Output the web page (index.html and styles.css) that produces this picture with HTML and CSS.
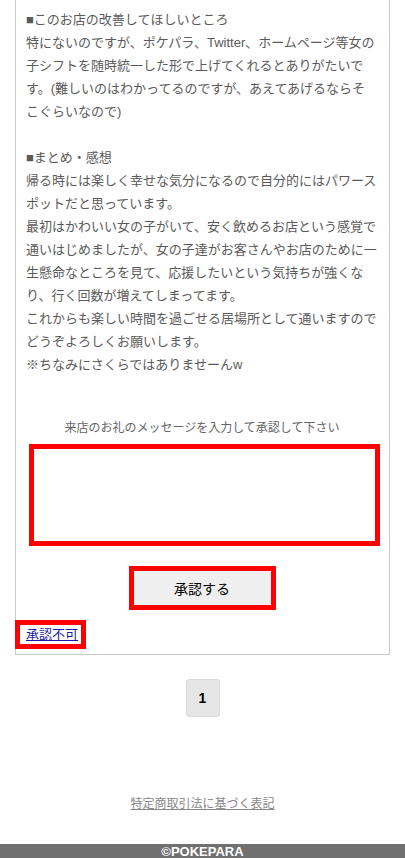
FILE: index.html
```html
<!DOCTYPE html>
<html lang="ja">
<head>
    <meta charset="UTF-8">
    <meta name="viewport" content="width=device-width, initial-scale=1.0">
    <title>口コミ承認 - ポケパラ</title>
    <link rel="stylesheet" href="styles.css">
</head>
<body>
    <div class="review-box">
        <div class="review-text">
            ■このお店の改善してほしいところ<br>
            特にないのですが、ポケパラ、Twitter、ホームページ等女の子シフトを随時統一した形で上げてくれるとありがたいです。(難しいのはわかってるのですが、あえてあげるならそこぐらいなので)<br>
            <br>
            ■まとめ・感想<br>
            帰る時には楽しく幸せな気分になるので自分的にはパワースポットだと思っています。<br>
            最初はかわいい女の子がいて、安く飲めるお店という感覚で通いはじめましたが、女の子達がお客さんやお店のために一生懸命なところを見て、応援したいという気持ちが強くなり、行く回数が増えてしまってます。<br>
            これからも楽しい時間を過ごせる居場所として通いますのでどうぞよろしくお願いします。<br>
            ※ちなみにさくらではありませーんw
        </div>
        <form class="reply-form">
            <p class="reply-label">来店のお礼のメッセージを入力して承認して下さい</p>
            <textarea class="reply-input"></textarea>
            <button type="button" class="approve-btn">承認する</button>
        </form>
        <a href="#" class="reject-link">承認不可</a>
    </div>

    <div class="pager">
        <span class="page-num">1</span>
    </div>

    <div class="legal">
        <a href="#">特定商取引法に基づく表記</a>
    </div>

    <footer class="copyright">©POKEPARA</footer>
</body>
</html>
```

FILE: styles.css
```css
body {
    margin: 0;
    padding: 0;
    background: #fff;
    font-family: "Liberation Sans", "Noto Sans CJK JP", sans-serif;
    color: #5a5a5a;
}
.review-box {
    margin: 0 15px;
    border: 1px solid #ccc;
    border-top: none;
    padding: 8px 11px 5px 10px;
}
.review-text {
    font-size: 13px;
    line-height: 23px;
}
.reply-form {
    display: flex;
    flex-direction: column;
    align-items: center;
    margin-top: 43px;
}
.reply-label {
    margin: 0;
    font-size: 12px;
    line-height: 18px;
    color: #666;
}
.reply-input {
    box-sizing: border-box;
    width: 351px;
    height: 102px;
    margin: 7px 0 0 4px;
    border: 5px solid #f00;
    background: #fff;
    resize: none;
}
.approve-btn {
    box-sizing: border-box;
    width: 147px;
    height: 44px;
    margin-top: 20px;
    border: 5px solid #f00;
    background: #efefef;
    color: #000;
    font-family: "Liberation Sans", "Noto Sans CJK JP", sans-serif;
    font-size: 14px;
}
.reject-link {
    display: inline-block;
    margin: 10px 0 0 -11px;
    padding: 0 3px 0 6px;
    border: 5px solid #f00;
    font-size: 13px;
    line-height: 19px;
    color: #1a1aa6;
}
.pager {
    display: flex;
    justify-content: center;
    margin-top: 24px;
}
.page-num {
    display: flex;
    align-items: center;
    justify-content: center;
    width: 34px;
    height: 38px;
    box-sizing: border-box;
    border: 1px solid #d8d8d8;
    border-radius: 3px;
    background: #e6e6e6;
    color: #000;
    font-family: "Liberation Sans", Arial, sans-serif;
    font-weight: bold;
    font-size: 14px;
}
.legal {
    margin-top: 78px;
    text-align: center;
    font-size: 12px;
    line-height: 18px;
}
.legal a {
    color: #888;
}
.copyright {
    margin-top: 31px;
    height: 26px;
    background: #707070;
    color: #fff;
    text-align: center;
    font-family: "Liberation Sans", Arial, sans-serif;
    font-weight: bold;
    font-size: 13px;
    line-height: 16px;
}
```
